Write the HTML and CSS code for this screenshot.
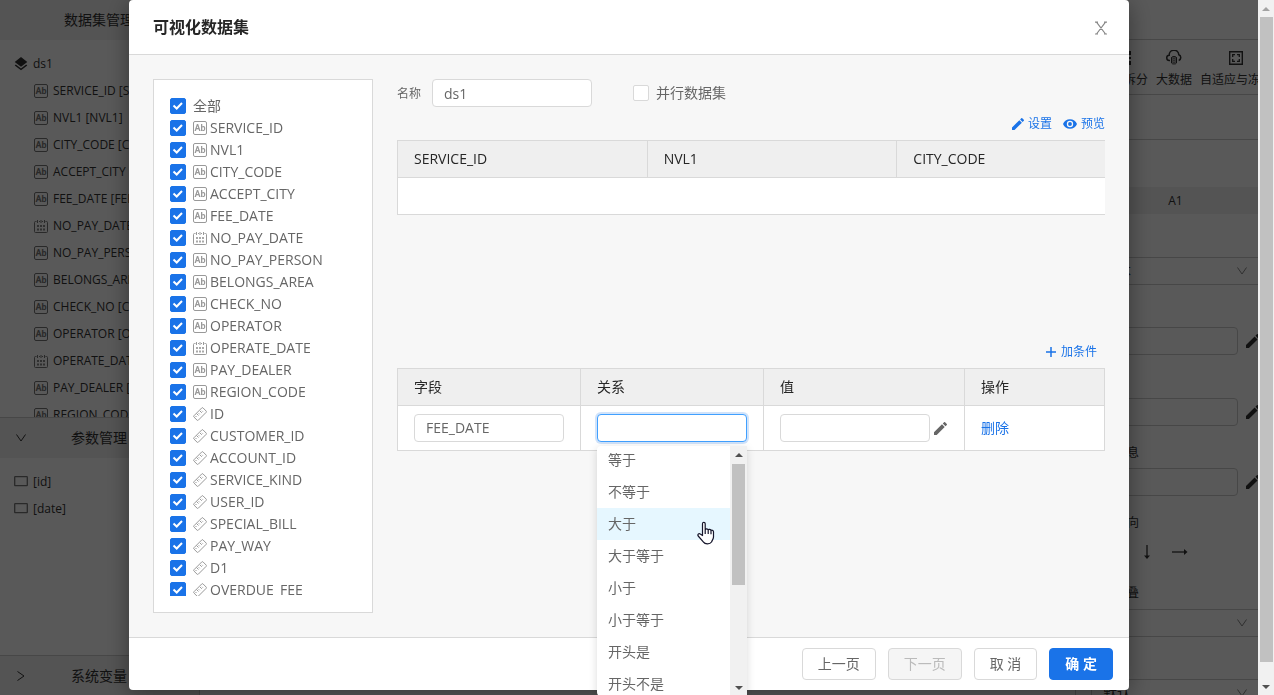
FILE: index.html
```html
<!DOCTYPE html>
<html lang="zh-CN">
<head>
<meta charset="utf-8">
<title>可视化数据集</title>
<link rel="stylesheet" href="styles.css">
</head>
<body>
<svg class="defs" aria-hidden="true">
  <symbol id="cal" viewBox="0 0 14 14"><path d="M2.500 2.500h-1a1 1 0 0 0-1 1v9a1 1 0 0 0 1 1h11a1 1 0 0 0 1-1v-9a1 1 0 0 0-1-1h-1M5 2.500h1M8 2.500h1M3.500 1v3M7 1v3M10.500 1v3" fill="none" stroke="currentColor"/><path d="M3 6h2v2H3zM6 6h2v2H6zM9 6h2v2H9zM3 9.500h2v2H3zM6 9.500h2v2H6zM9 9.500h2v2H9z" fill="currentColor" opacity=".85"/></symbol>
  <symbol id="ruler" viewBox="0 0 14 14"><path d="M8.800.9Q9.400.4 10 .9l3.200 3.200q.5.600 0 1.200l-7.900 7.900q-.6.500-1.200 0L.9 10q-.5-.6 0-1.200zM3.500 6.500l2 2M5.700 6.300l1 1M7 4l1.800 1.800M9 3.800l.8.8M2.500 9l1 1" fill="none" stroke="currentColor" stroke-linejoin="round"/></symbol>
  <symbol id="pencil" viewBox="3 3 18 18"><path fill="currentColor" d="M3 17.250V21h3.750L17.810 9.940l-3.750-3.750zM20.710 7.040a1 1 0 0 0 0-1.410l-2.340-2.340a1 1 0 0 0-1.410 0l-1.830 1.830 3.750 3.750z"/></symbol>
  <symbol id="eye" viewBox="1 4 22 16"><path fill="currentColor" d="M12 4.500C7 4.500 2.730 7.610 1 12c1.730 4.390 6 7.500 11 7.500s9.270-3.110 11-7.500c-1.730-4.390-6-7.500-11-7.500zM12 17a5 5 0 1 1 0-10 5 5 0 0 1 0 10zm0-8a3 3 0 1 0 0 6 3 3 0 0 0 0-6z"/></symbol>
  <symbol id="layers" viewBox="2 2 20 20"><path fill="currentColor" d="m12 18.500-7.400-5.700L3 14l9 7 9-7-1.600-1.200zM12 16l9-7-9-7-9 7z"/></symbol>
  <symbol id="down" viewBox="0 0 12 12"><path d="M1.500 2.500 6 9l4.500-6.500" fill="none" stroke="currentColor"/></symbol>
  <symbol id="rect" viewBox="0 0 14 14"><rect x=".7" y="1.700" width="12.600" height="9" rx=".5" fill="none" stroke="currentColor" stroke-width="1.300"/></symbol>
</svg>

<div class="app">
  <aside class="left">
    <h2 class="bar bar-first">数据集管理</h2>
    <ul class="tree tree-data">
      <li class="root"><svg class="i14"><use href="#layers"/></svg>ds1</li>
      <li><span class="ab">Ab</span>SERVICE_ID [SERVICE_ID]</li>
      <li><span class="ab">Ab</span>NVL1 [NVL1]</li>
      <li><span class="ab">Ab</span>CITY_CODE [CITY_CODE]</li>
      <li><span class="ab">Ab</span>ACCEPT_CITY [ACCEPT_CITY]</li>
      <li><span class="ab">Ab</span>FEE_DATE [FEE_DATE]</li>
      <li><svg class="i14"><use href="#cal"/></svg>NO_PAY_DATE [NO_PAY_DATE]</li>
      <li><span class="ab">Ab</span>NO_PAY_PERSON [NO_PAY_PERSON]</li>
      <li><span class="ab">Ab</span>BELONGS_AREA [BELONGS_AREA]</li>
      <li><span class="ab">Ab</span>CHECK_NO [CHECK_NO]</li>
      <li><span class="ab">Ab</span>OPERATOR [OPERATOR]</li>
      <li><svg class="i14"><use href="#cal"/></svg>OPERATE_DATE [OPERATE_DATE]</li>
      <li><span class="ab">Ab</span>PAY_DEALER [PAY_DEALER]</li>
      <li><span class="ab">Ab</span>REGION_CODE [REGION_CODE]</li>
    </ul>
    <h2 class="bar"><svg class="i12"><use href="#down"/></svg>参数管理</h2>
    <ul class="tree tree-params">
      <li><svg class="i14"><use href="#rect"/></svg>[id]</li>
      <li><svg class="i14"><use href="#rect"/></svg>[date]</li>
    </ul>
    <h2 class="bar bar-last"><svg class="i12 turned"><use href="#down"/></svg>系统变量</h2>
  </aside>
  <main class="sheet"></main>
  <aside class="right">
    <div class="top"></div>
    <div class="tools">
      <div class="tool"><svg class="i16" viewBox="0 0 16 16"><path d="M2 2h12v3M2 14h12v-3M2 2v12M14 7v2" fill="none" stroke="currentColor" stroke-width="2"/></svg>合并拆分</div>
      <div class="tool"><svg class="i16" viewBox="0 0 16 16"><path d="M4 10.500H3.500a2.600 2.600 0 0 1-.3-5.200A4.800 4.800 0 0 1 12.800 4.700a3.100 3.100 0 0 1-.1 5.800" fill="none" stroke="currentColor" stroke-width="1.500"/><path d="M5.500 7.500c0-1.300 5-1.300 5 0v5.500c0 1.300-5 1.300-5 0zM5.500 9.500c1 .9 4 .9 5 0M5.500 11.500c1 .9 4 .9 5 0M5.500 7.500c1 .9 4 .9 5 0" fill="none" stroke="currentColor"/></svg>大数据</div>
      <div class="tool"><svg class="i16" viewBox="0 0 16 16"><path d="M1.700 1.700h12.600v12.600H1.700z" fill="none" stroke="currentColor" stroke-width="1.400"/><path d="M4.700 7V4.700H7M9 4.700h2.300V7M4.700 9v2.300H7M9 11.300h2.300V9" fill="none" stroke="currentColor" stroke-width="1.300"/></svg>自适应与冻结</div>
    </div>
    <div class="strip"></div>
    <div class="cell">A1</div>
    <div class="form">
      <div class="row pick">文本<svg class="i12"><use href="#down"/></svg></div>
      <div class="row text"><input aria-label="属性一"><svg class="i14"><use href="#pencil"/></svg></div>
      <div class="row text"><input aria-label="属性二"><svg class="i14"><use href="#pencil"/></svg></div>
      <label class="cap" for="tip">提示信息</label>
      <div class="row text first"><input id="tip"><svg class="i14"><use href="#pencil"/></svg></div>
      <div class="cap">文字方向</div>
      <div class="arrows">
        <svg class="i16" viewBox="0 0 16 16"><path d="M8 1v12" stroke="currentColor" stroke-width="1.300"/><path d="M5 11.500h6L8 15z" fill="currentColor"/></svg>
        <svg class="i16" viewBox="0 0 16 16"><path d="M0 8h13" stroke="currentColor" stroke-width="1.300"/><path d="M12 5v6l3.500-3z" fill="currentColor"/></svg>
      </div>
      <div class="cap">文字重叠</div>
      <div class="row pick last"><svg class="i12"><use href="#down"/></svg></div>
      <div class="row pick">默认<svg class="i12"><use href="#down"/></svg></div>
    </div>
  </aside>
</div>

<div class="pagebar"><span class="up off"></span><span class="thumb"></span><span class="dn"></span></div>

<div class="mask">
  <section class="modal" role="dialog" aria-labelledby="title">
    <header class="m-head">
      <h1 id="title">可视化数据集</h1>
      <button class="close" aria-label="关闭"><svg class="i14" viewBox="0 0 14 14"><path d="M1 1.200h3M10 1.200h3M1 13h3M10 13h3M2.500 1.200l9 11.800M11.500 1.200 2.500 13" fill="none" stroke="currentColor" stroke-width="1.200"/></svg></button>
    </header>
    <div class="m-body">
      <div class="fields"><div class="scroll">
        <label><input type="checkbox" checked>全部</label>
        <label><input type="checkbox" checked><span class="ab">Ab</span>SERVICE_ID</label>
        <label><input type="checkbox" checked><span class="ab">Ab</span>NVL1</label>
        <label><input type="checkbox" checked><span class="ab">Ab</span>CITY_CODE</label>
        <label><input type="checkbox" checked><span class="ab">Ab</span>ACCEPT_CITY</label>
        <label><input type="checkbox" checked><span class="ab">Ab</span>FEE_DATE</label>
        <label><input type="checkbox" checked><svg class="i14"><use href="#cal"/></svg>NO_PAY_DATE</label>
        <label><input type="checkbox" checked><span class="ab">Ab</span>NO_PAY_PERSON</label>
        <label><input type="checkbox" checked><span class="ab">Ab</span>BELONGS_AREA</label>
        <label><input type="checkbox" checked><span class="ab">Ab</span>CHECK_NO</label>
        <label><input type="checkbox" checked><span class="ab">Ab</span>OPERATOR</label>
        <label><input type="checkbox" checked><svg class="i14"><use href="#cal"/></svg>OPERATE_DATE</label>
        <label><input type="checkbox" checked><span class="ab">Ab</span>PAY_DEALER</label>
        <label><input type="checkbox" checked><span class="ab">Ab</span>REGION_CODE</label>
        <label><input type="checkbox" checked><svg class="i14"><use href="#ruler"/></svg>ID</label>
        <label><input type="checkbox" checked><svg class="i14"><use href="#ruler"/></svg>CUSTOMER_ID</label>
        <label><input type="checkbox" checked><svg class="i14"><use href="#ruler"/></svg>ACCOUNT_ID</label>
        <label><input type="checkbox" checked><svg class="i14"><use href="#ruler"/></svg>SERVICE_KIND</label>
        <label><input type="checkbox" checked><svg class="i14"><use href="#ruler"/></svg>USER_ID</label>
        <label><input type="checkbox" checked><svg class="i14"><use href="#ruler"/></svg>SPECIAL_BILL</label>
        <label><input type="checkbox" checked><svg class="i14"><use href="#ruler"/></svg>PAY_WAY</label>
        <label><input type="checkbox" checked><svg class="i14"><use href="#ruler"/></svg>D1</label>
        <label><input type="checkbox" checked><svg class="i14"><use href="#ruler"/></svg>OVERDUE_FEE</label>
      </div></div>
      <div class="detail">
        <div class="name-row">
          <label class="small" for="name">名称</label>
          <input id="name" class="box name" value="ds1">
          <label class="parallel"><input type="checkbox">并行数据集</label>
        </div>
        <div class="links">
          <a href="#"><svg class="i12"><use href="#pencil"/></svg>设置</a>
          <a href="#"><svg class="i14"><use href="#eye"/></svg>预览</a>
        </div>
        <div class="preview">
          <table class="cols">
            <thead><tr><th>SERVICE_ID</th><th>NVL1</th><th>CITY_CODE</th></tr></thead>
            <tbody><tr><td></td><td></td><td></td></tr></tbody>
          </table>
        </div>
        <div class="links add"><a href="#"><svg class="i12" viewBox="0 0 12 12"><path d="M6 1v10M1 6h10" stroke="currentColor" stroke-width="1.500"/></svg>加条件</a></div>
        <table class="conds">
          <thead><tr><th>字段</th><th>关系</th><th class="c-val">值</th><th class="c-op">操作</th></tr></thead>
          <tbody><tr>
            <td><select class="box" aria-label="字段"><option>FEE_DATE</option></select></td>
            <td><div class="combo">
              <select class="box focus" aria-label="关系"><option></option></select>
              <div class="menu">
                <ul>
                  <li>等于</li><li>不等于</li><li class="hover">大于</li><li>大于等于</li><li>小于</li><li>小于等于</li><li>开头是</li><li>开头不是</li>
                </ul>
                <div class="menubar"><span class="up"></span><span class="thumb"></span><span class="dn"></span></div>
                <svg class="cursor" viewBox="0 0 18 24"><path d="M5.500 14.500V2.800c0-2 2.700-2 2.700 0v6c.2-1.300 2.800-1.300 3 .3.400-1 2.600-.9 2.800.6.500-.8 2.500-.6 2.500 1V16c0 2-1.500 3.500-2 5-1.500 2.500-6.500 2.500-8 .2L1.200 15c-1-1.900.8-3 2.100-1.900zM8.200 9v4M11.200 9.500V13M14 10v3.200" fill="#fff" stroke="#15152a" stroke-width="1.200" stroke-linejoin="round"/></svg>
              </div>
            </div></td>
            <td><div class="val"><input class="box" aria-label="值"><svg class="i13"><use href="#pencil"/></svg></div></td>
            <td><a href="#">删除</a></td>
          </tr></tbody>
        </table>
      </div>
    </div>
    <footer class="m-foot">
      <button>上一页</button>
      <button disabled>下一页</button>
      <button>取 消</button>
      <button class="ok">确 定</button>
    </footer>
  </section>
</div>
</body>
</html>
```
FILE: styles.css
```css
* { box-sizing: border-box; }
body {
  margin: 0;
  height: 100vh;
  overflow: hidden;
  display: flex;
  font: 14px/22px "Open Sans", "Noto Sans CJK SC", sans-serif;
  color: #666;
  background: #fff;
}
ul { margin: 0; padding: 0; list-style: none; }
h1, h2 { margin: 0; font-weight: 400; }
input, select, button { font: inherit; color: inherit; margin: 0; }
a { color: #1a73e8; text-decoration: none; }
svg { flex: none; }
.defs { position: absolute; width: 0; height: 0; }
.i12 { width: 12px; height: 12px; }
.i13 { width: 13px; height: 13px; }
.i14 { width: 14px; height: 14px; }
.i16 { width: 16px; height: 16px; }
.ab {
  flex: none;
  width: 14px;
  height: 14px;
  border: 1px solid currentColor;
  border-radius: 2px;
  font: 700 9px/12px "Roboto", sans-serif;
  display: flex;
  justify-content: center;
  color: #999;
}

/* page behind the dialog */
.app { flex: 1; min-width: 0; display: flex; color: #333; }
.left { width: 200px; border-right: 1px solid #ccc; display: flex; flex-direction: column; }
.bar {
  flex: none;
  height: 41px;
  border-top: 1px solid #ccc;
  background: #efefef;
  font-size: 14px;
  line-height: 40px;
  padding-left: 15px;
  display: flex;
  align-items: center;
  gap: 44px;
}
.bar-first { height: 40px; border-top: 0; padding-left: 64px; }
.bar-last { height: 40px; }
.turned { transform: rotate(-90deg); }
.tree { overflow: hidden; font-size: 12px; line-height: 27px; white-space: nowrap; }
.tree li { display: flex; align-items: center; gap: 5px; padding-left: 34px; height: 27px; }
.tree .root { padding-left: 14px; }
.tree .ab, .tree svg { color: #777; }
.tree .root svg { color: #333; }
.tree-data { flex: 0 0 377px; padding-top: 10px; }
.tree-params { flex: 1; padding-top: 10px; }
.tree-params li { padding-left: 14px; }
.sheet { flex: 1; border-right: 1px solid #ccc; }
.right { width: 182px; overflow: hidden; font-size: 12px; }
.top { height: 40px; border-bottom: 1px solid #ccc; }
.tools { height: 55px; border-bottom: 1px solid #ccc; display: flex; gap: 8px; padding: 10px 0 0 24px; }
.tool { flex: none; display: flex; flex-direction: column; align-items: center; gap: 3px; }
.strip { height: 45px; border-bottom: 1px solid #ccc; }
.cell { margin-top: 47px; height: 27px; line-height: 28px; background: #efefef; padding-left: 17px; text-align: center; }
.form { padding: 43px 0 0 15px; }
.row { height: 28px; display: flex; align-items: center; margin-bottom: 42px; font-size: 14px; }
.row input { width: 147px; height: 28px; border: 1px solid #ccc; border-radius: 4px; background: none; }
.text { gap: 8px; }
.text + .text { margin-top: 43px; margin-bottom: 16px; }
.first { margin-top: 4px; }
.pick { border: 1px solid #ccc; border-right: 0; border-radius: 4px 0 0 4px; padding: 0 10px 0 11px; }
.pick svg { margin-left: auto; color: #888; }
.form .text.first { margin-bottom: 16px; }
.cap { display: block; height: 22px; line-height: 22px; }
.arrows { display: flex; gap: 17px; padding: 10px 0 22px 48px; }
.last { margin-top: 5px; }

/* scroll bars */
.pagebar, .menubar { flex: none; display: flex; flex-direction: column; align-items: center; background: #f1f1f1; }
.pagebar { width: 16px; padding: 7px 0 6px; gap: 6px; }
.menubar { width: 17px; padding: 7px 0 6px; gap: 7px; }
.thumb { width: 13px; height: 121px; background: #c1c1c1; }
.pagebar .thumb { height: 645px; }
.up, .dn { border: 4px solid transparent; width: 0; height: 0; }
.up { border-top: 0; border-bottom-color: #505050; }
.up.off { border-bottom-color: #a3a3a3; }
.dn { border-bottom: 0; border-top-color: #505050; margin-top: auto; }

/* dialog */
.mask { position: fixed; inset: 0 16px 0 0; background: rgba(0, 0, 0, .65); }
.modal {
  width: 1000px;
  max-width: 100%;
  margin: 0 auto;
  background: #fff;
  border-radius: 4px;
  box-shadow: 0 4px 24px rgba(0, 0, 0, .4);
}
.m-head { height: 55px; border-bottom: 1px solid #d9d9d9; padding: 0 20px 0 24px; display: flex; align-items: center; justify-content: space-between; }
.m-head h1 { font-size: 16px; line-height: 24px; font-weight: 700; color: #262626; }
.close { border: 0; background: none; padding: 2px 1px 0; height: 16px; display: flex; color: #888; }
.m-body { background: #f7f7f7; padding: 24px; display: flex; gap: 24px; }
.fields { width: 220px; height: 534px; background: #fff; border: 1px solid #d9d9d9; padding: 15px 16px 16px; }
.scroll { height: 100%; overflow: hidden; }
.scroll label { display: flex; align-items: center; height: 22px; gap: 3px; }
.scroll svg { color: #999; }
input[type="checkbox"] { appearance: none; flex: none; width: 16px; height: 16px; border: 1px solid #d9d9d9; border-radius: 2px; background: #fff; }
.scroll input[type="checkbox"] { margin-right: 4px; }
input[type="checkbox"]:checked {
  border-color: #1a73e8;
  background: #1a73e8 url("data:image/svg+xml,%3Csvg xmlns='http://www.w3.org/2000/svg' viewBox='0 0 14 14'%3E%3Cpath d='M2.500 6.500 5.700 9.500 11 4' fill='none' stroke='%23fff' stroke-width='2'/%3E%3C/svg%3E");
}
.detail { flex: 1; min-width: 0; }
.name-row { display: flex; align-items: center; }
.small { font-size: 12px; padding-top: 2px; }
.box { display: block; appearance: none; width: 150px; height: 28px; border: 1px solid #d9d9d9; border-radius: 4px; background: #fff; padding: 0 11px; outline: 0; }
.name { width: 160px; margin: 0 41px 0 11px; }
.parallel { display: flex; align-items: center; gap: 7px; }
.links { display: flex; justify-content: flex-end; gap: 11px; margin-top: 5px; padding-bottom: 4px; height: 28px; font-size: 12px; }
.links a { display: flex; align-items: center; gap: 4px; }
.preview { overflow: hidden; }
table { border-collapse: collapse; table-layout: fixed; width: 100%; }
th, td { border: 1px solid #d9d9d9; text-align: left; padding: 0 16px; background: #fff; }
th { background: #efefef; height: 37px; font-weight: 400; color: #262626; }
td { height: 37px; }
.cols { width: 750px; }
.cols td + td { border-left: 0; }
.cols td:not(:last-child) { border-right: 0; }
.add { margin-top: 122px; padding: 0 8px 2px 0; height: 31px; }
.conds th { width: 183px; }
.conds .c-val { width: 201px; }
.conds .c-op { width: auto; }
.conds td { height: 45px; }
.val { display: flex; align-items: center; gap: 4px; }
.focus { border-color: #40a0ff; box-shadow: 0 0 0 2px rgba(26, 115, 232, .2); }
.combo { position: relative; }
.menu {
  position: absolute;
  top: 32px;
  left: 0;
  width: 150px;
  height: 250px;
  display: flex;
  background: #fff;
  border-radius: 4px;
  box-shadow: 0 2px 8px rgba(0, 0, 0, .15);
}
.menu ul { flex: 1; overflow: hidden; }
.menu li { height: 32px; line-height: 32px; padding: 0 11px; }
.menu li:first-child { height: 30px; line-height: 28px; }
.hover { background: #e6f7ff; }
.cursor { position: absolute; left: 100px; top: 75px; width: 18px; height: 24px; }
.m-foot { border-top: 1px solid #d9d9d9; padding: 10px 16px; display: flex; justify-content: flex-end; gap: 12px; }
.m-foot button { height: 32px; padding: 0 15px; border: 1px solid #d9d9d9; border-radius: 4px; background: #fff; }
.m-foot button:disabled { background: #f5f5f5; color: #bbb; }
.m-foot .ok { background: #1a73e8; border-color: #1a73e8; color: #fff; font-weight: 700; }
```
